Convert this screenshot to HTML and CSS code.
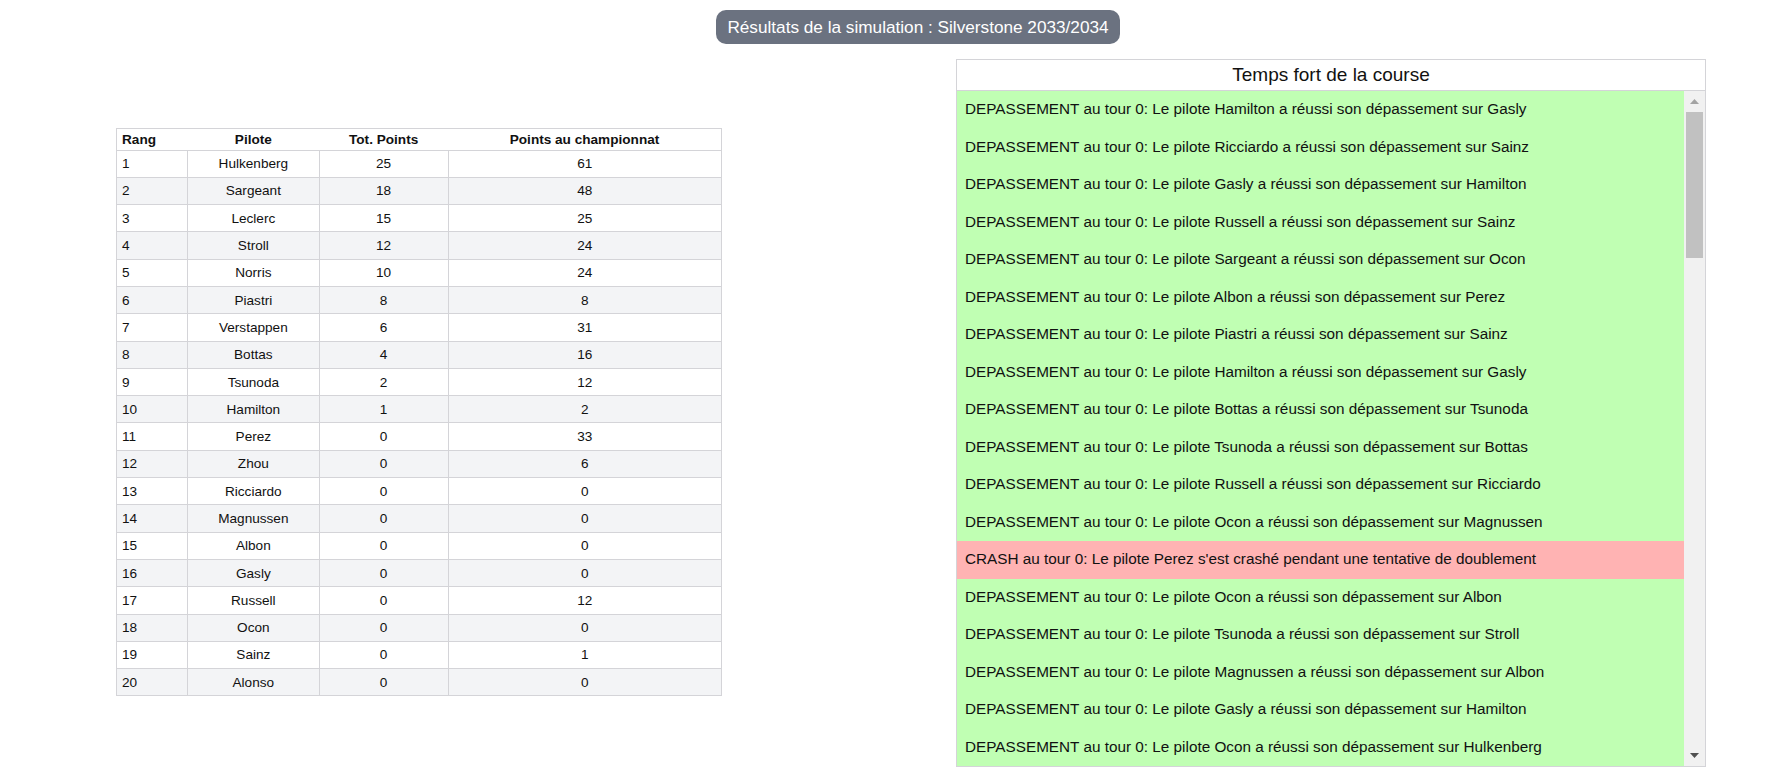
FILE: index.html
```html
<!DOCTYPE html>
<html lang="fr">
<head>
<meta charset="utf-8">
<title>Résultats de la simulation</title>
<link rel="stylesheet" href="styles.css">
</head>
<body>
<header class="top">
  <h1 class="pill">Résultats de la simulation : Silverstone 2033/2034</h1>
</header>
<main class="content">
  <section class="results">
    <table class="standings">
      <colgroup>
        <col class="c-rang"><col class="c-pilote"><col class="c-tot"><col class="c-champ">
      </colgroup>
      <thead>
        <tr><th class="left">Rang</th><th>Pilote</th><th>Tot. Points</th><th>Points au championnat</th></tr>
      </thead>
      <tbody>
        <tr><td class="left">1</td><td>Hulkenberg</td><td>25</td><td>61</td></tr>
        <tr><td class="left">2</td><td>Sargeant</td><td>18</td><td>48</td></tr>
        <tr><td class="left">3</td><td>Leclerc</td><td>15</td><td>25</td></tr>
        <tr><td class="left">4</td><td>Stroll</td><td>12</td><td>24</td></tr>
        <tr><td class="left">5</td><td>Norris</td><td>10</td><td>24</td></tr>
        <tr><td class="left">6</td><td>Piastri</td><td>8</td><td>8</td></tr>
        <tr><td class="left">7</td><td>Verstappen</td><td>6</td><td>31</td></tr>
        <tr><td class="left">8</td><td>Bottas</td><td>4</td><td>16</td></tr>
        <tr><td class="left">9</td><td>Tsunoda</td><td>2</td><td>12</td></tr>
        <tr><td class="left">10</td><td>Hamilton</td><td>1</td><td>2</td></tr>
        <tr><td class="left">11</td><td>Perez</td><td>0</td><td>33</td></tr>
        <tr><td class="left">12</td><td>Zhou</td><td>0</td><td>6</td></tr>
        <tr><td class="left">13</td><td>Ricciardo</td><td>0</td><td>0</td></tr>
        <tr><td class="left">14</td><td>Magnussen</td><td>0</td><td>0</td></tr>
        <tr><td class="left">15</td><td>Albon</td><td>0</td><td>0</td></tr>
        <tr><td class="left">16</td><td>Gasly</td><td>0</td><td>0</td></tr>
        <tr><td class="left">17</td><td>Russell</td><td>0</td><td>12</td></tr>
        <tr><td class="left">18</td><td>Ocon</td><td>0</td><td>0</td></tr>
        <tr><td class="left">19</td><td>Sainz</td><td>0</td><td>1</td></tr>
        <tr><td class="left">20</td><td>Alonso</td><td>0</td><td>0</td></tr>
      </tbody>
    </table>
  </section>

  <section class="panel">
    <h2 class="panel-title">Temps fort de la course</h2>
    <div class="panel-body">
      <ul class="events">
        <li class="ev ok">DEPASSEMENT au tour 0: Le pilote Hamilton a réussi son dépassement sur Gasly</li>
        <li class="ev ok">DEPASSEMENT au tour 0: Le pilote Ricciardo a réussi son dépassement sur Sainz</li>
        <li class="ev ok">DEPASSEMENT au tour 0: Le pilote Gasly a réussi son dépassement sur Hamilton</li>
        <li class="ev ok">DEPASSEMENT au tour 0: Le pilote Russell a réussi son dépassement sur Sainz</li>
        <li class="ev ok">DEPASSEMENT au tour 0: Le pilote Sargeant a réussi son dépassement sur Ocon</li>
        <li class="ev ok">DEPASSEMENT au tour 0: Le pilote Albon a réussi son dépassement sur Perez</li>
        <li class="ev ok">DEPASSEMENT au tour 0: Le pilote Piastri a réussi son dépassement sur Sainz</li>
        <li class="ev ok">DEPASSEMENT au tour 0: Le pilote Hamilton a réussi son dépassement sur Gasly</li>
        <li class="ev ok">DEPASSEMENT au tour 0: Le pilote Bottas a réussi son dépassement sur Tsunoda</li>
        <li class="ev ok">DEPASSEMENT au tour 0: Le pilote Tsunoda a réussi son dépassement sur Bottas</li>
        <li class="ev ok">DEPASSEMENT au tour 0: Le pilote Russell a réussi son dépassement sur Ricciardo</li>
        <li class="ev ok">DEPASSEMENT au tour 0: Le pilote Ocon a réussi son dépassement sur Magnussen</li>
        <li class="ev crash">CRASH au tour 0: Le pilote Perez s'est crashé pendant une tentative de doublement</li>
        <li class="ev ok">DEPASSEMENT au tour 0: Le pilote Ocon a réussi son dépassement sur Albon</li>
        <li class="ev ok">DEPASSEMENT au tour 0: Le pilote Tsunoda a réussi son dépassement sur Stroll</li>
        <li class="ev ok">DEPASSEMENT au tour 0: Le pilote Magnussen a réussi son dépassement sur Albon</li>
        <li class="ev ok">DEPASSEMENT au tour 0: Le pilote Gasly a réussi son dépassement sur Hamilton</li>
        <li class="ev ok">DEPASSEMENT au tour 0: Le pilote Ocon a réussi son dépassement sur Hulkenberg</li>
      </ul>
      <div class="scrollbar" aria-hidden="true">
        <div class="sb-btn">
          <svg width="9" height="5" viewBox="0 0 9 5"><path d="M4.5 0 L9 5 L0 5 Z" fill="#a3a3a3"/></svg>
        </div>
        <div class="sb-track">
          <div class="sb-thumb"></div>
        </div>
        <div class="sb-btn">
          <svg width="9" height="5" viewBox="0 0 9 5"><path d="M0 0 L9 0 L4.5 5 Z" fill="#505050"/></svg>
        </div>
      </div>
    </div>
  </section>
</main>
</body>
</html>
```

FILE: styles.css
```css
* { box-sizing: border-box; }

html, body {
  margin: 0;
  padding: 0;
  background: #ffffff;
  font-family: "Liberation Sans", Arial, sans-serif;
  color: #111111;
}

.top {
  display: flex;
  justify-content: center;
  padding: 10px 0 0 66px;
}

.pill {
  margin: 0;
  background: #6b7280;
  color: #ffffff;
  font-size: 17.2px;
  font-weight: normal;
  line-height: 22px;
  padding: 6px 11px;
  border-radius: 10px;
}

.content {
  display: flex;
  justify-content: space-between;
  align-items: flex-start;
  padding: 15px 64px 0 116px;
}

.results {
  padding-top: 69px;
}

.standings {
  border-collapse: collapse;
  width: 606px;
  font-size: 13.6px;
  border: 1px solid #d4d4d8;
}

.c-rang { width: 71px; }
.c-pilote { width: 132px; }
.c-tot { width: 129px; }
.c-champ { width: 274px; }

.standings th {
  font-weight: bold;
  height: 21.5px;
  padding: 0 5px;
  text-align: center;
  border-bottom: 1px solid #d4d4d8;
}

.standings td {
  height: 27.3px;
  padding: 0 5px;
  text-align: center;
  border: 1px solid #d4d4d8;
}

.standings .left { text-align: left; }

.standings tbody tr:nth-child(even) { background: #f3f4f6; }

.panel {
  width: 750px;
  border: 1px solid #d4d4d8;
  display: flex;
  flex-direction: column;
}

.panel-title {
  margin: 0;
  height: 31px;
  border-bottom: 1px solid #d4d4d8;
  font-size: 19px;
  font-weight: normal;
  line-height: 29px;
  text-align: center;
  color: #111111;
}

.panel-body {
  display: flex;
  height: 675px;
}

.events {
  list-style: none;
  margin: 0;
  padding: 0;
  flex: 1;
  overflow: hidden;
}

.ev {
  font-size: 15.3px;
  line-height: 22.5px;
  padding: 7px 8px 8px;
  white-space: nowrap;
}

.ev.ok { background: #c0ffb3; }
.ev.crash { background: #ffb3b3; }

.scrollbar {
  width: 21px;
  background: #f1f1f1;
  display: flex;
  flex-direction: column;
}

.sb-btn {
  height: 21px;
  display: flex;
  align-items: center;
  justify-content: center;
}

.sb-btn svg { display: block; }

.sb-track {
  flex: 1;
  padding: 0 2px;
}

.sb-thumb {
  height: 146px;
  background: #c1c1c1;
}
```
